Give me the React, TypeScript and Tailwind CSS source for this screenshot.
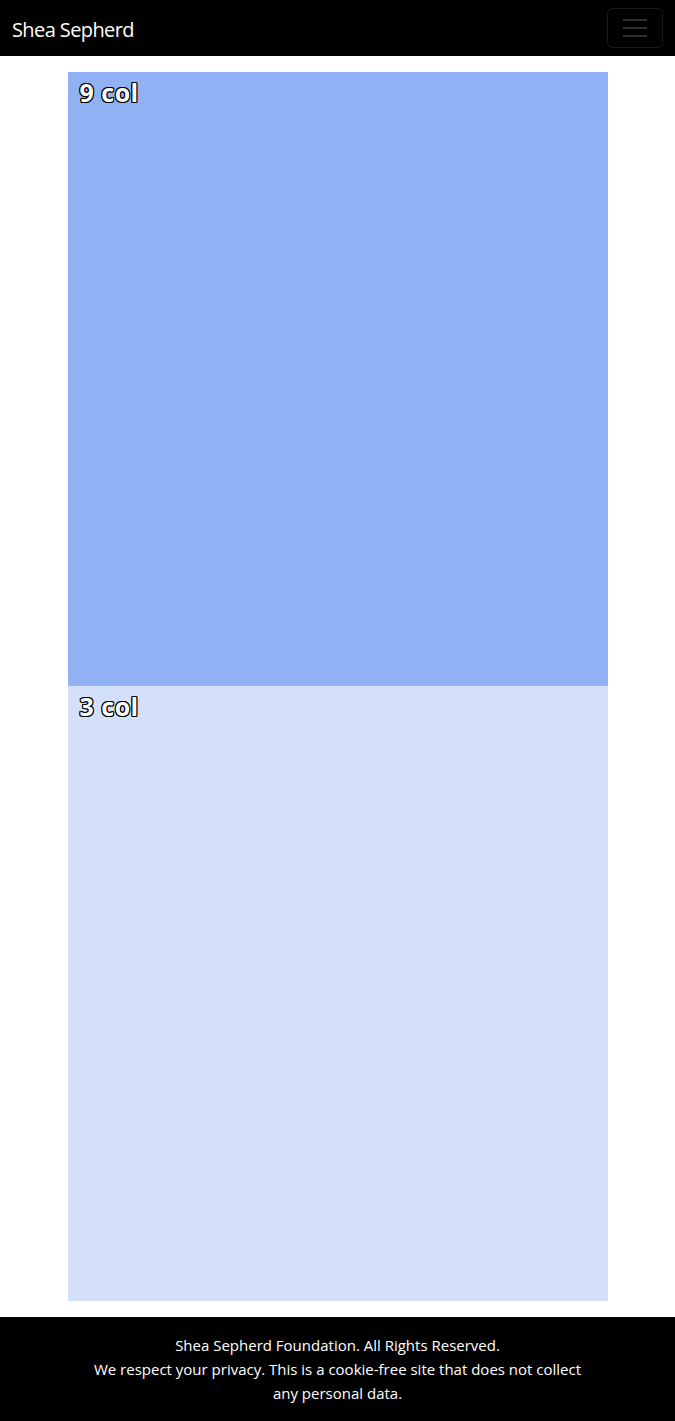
const outline =
  'text-white text-[25px] font-bold tracking-[0.5px] [-webkit-text-stroke:1px_black] [paint-order:stroke_fill] [text-shadow:-1px_-1px_0_#000,1px_-1px_0_#000,-1px_1px_0_#000,1px_1px_0_#000,0_1px_0_#000,0_-1px_0_#000,1px_0_0_#000,-1px_0_0_#000]'

export default function App() {
  return (
    <div className="min-h-[1421px] flex flex-col bg-white font-['Open_Sans',sans-serif]">
      <nav className="h-14 bg-black flex items-center justify-between px-3">
        <span className="text-white text-[20px] tracking-[-0.6px] pt-1">Shea Sepherd</span>
        <button className="w-14 h-10 border border-white/10 rounded-md flex flex-col items-center justify-center gap-[6px]">
          <span className="block w-6 h-[2px] bg-[#2b3035]" />
          <span className="block w-6 h-[2px] bg-[#2b3035]" />
          <span className="block w-6 h-[2px] bg-[#2b3035]" />
        </button>
      </nav>

      <main className="w-[540px] mx-auto my-4 flex flex-col">
        <div className="h-[614px] bg-[#91b1f5] px-3 pt-[2px]">
          <h2 className={outline}>9 col</h2>
        </div>
        <div className="h-[615px] bg-[#d4dffa] px-3 pt-[2px]">
          <h2 className={outline}>3 col</h2>
        </div>
      </main>

      <footer className="bg-black text-white text-center text-[15px] leading-6 py-4 px-[86px]">
        <p>Shea Sepherd Foundation. All Rights Reserved.</p>
        <p>We respect your privacy. This is a cookie-free site that does not collect any personal data.</p>
      </footer>
    </div>
  )
}
